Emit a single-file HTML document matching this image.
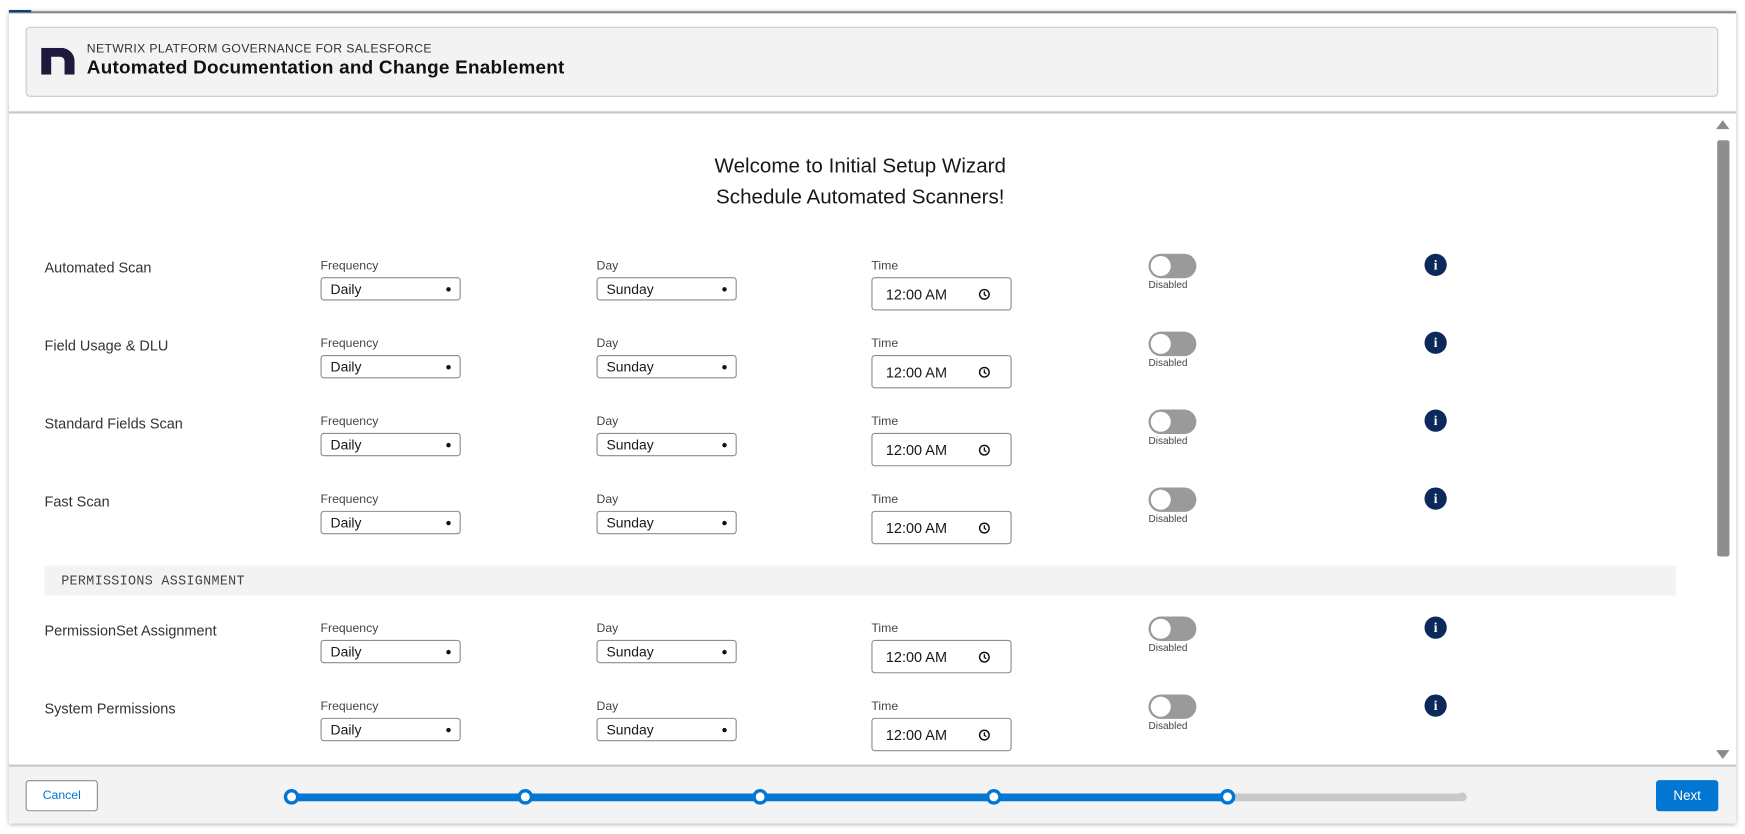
<!DOCTYPE html>
<html><head><meta charset="utf-8"><style>
*{box-sizing:border-box;margin:0;padding:0}
html,body{width:1745px;height:833px;overflow:hidden;background:#fff;font-family:"Liberation Sans",sans-serif;color:#181818}
#w{position:absolute;left:0;top:0;width:1568px;height:749px;transform:scale(1.1129);transform-origin:0 0}
.a{position:absolute}
.card{left:8px;top:10px;width:1552px;height:730px;border-top:2px solid #8a8a8a;box-shadow:0 1px 4px rgba(0,0,0,.35);background:#fff}
.hdr{left:23px;top:24px;width:1521px;height:63px;background:#f3f3f3;border:1px solid #c9c9c9;border-radius:4px}
.lbl{font-size:13px;color:#333}
.sm{font-size:11px;color:#444}
.sel{width:126px;height:21px;border:1px solid #8c8c8c;border-radius:3px;font-size:12.5px;padding:3px 0 0 8px;color:#181818;background:#fff}
.sel:after{content:"";position:absolute;right:8px;top:8px;width:4px;height:4px;background:#111;border-radius:50%}
.tm{width:126px;height:30px;border:1px solid #8c8c8c;border-radius:3px;font-size:13px;padding:7px 0 0 12px;background:#fff}
.tm svg{position:absolute;right:18px;top:9px}
.tg{width:43px;height:22px;border-radius:11px;background:#9a9a9a}
.tg:after{content:"";position:absolute;left:2px;top:2px;width:18px;height:18px;border-radius:50%;background:#fff}
.dis{font-size:9px;color:#444}
.inf{width:20px;height:20px;border-radius:50%;background:#0b2a5b;color:#fff;font:bold 12px "Liberation Serif",serif;text-align:center;line-height:20px}
.dot{width:14px;height:14px;border-radius:50%;border:3px solid #0176d3;background:#fff;top:709px}
</style></head><body><div id="w">
<div class="a card"></div>
<div class="a" style="left:8px;top:9px;width:20px;height:2px;background:#0b3b7a"></div>
<div class="a hdr"></div>
<svg class="a" style="left:37px;top:43px" width="30" height="24" viewBox="0 0 30 24"><path d="M0 24V0h18a12 12 0 0 1 12 12v12h-9V12a4 4 0 0 0-4-4H9v16z" fill="#1f1a3d"/></svg>
<div class="a" style="left:78px;top:38px;font-size:11px;color:#333;letter-spacing:.3px">NETWRIX PLATFORM GOVERNANCE FOR SALESFORCE</div>
<div class="a" style="left:78px;top:51px;font-size:17px;font-weight:bold;color:#111;letter-spacing:.2px">Automated Documentation and Change Enablement</div>
<div class="a" style="left:8px;top:100px;width:1552px;height:2px;background:#c8c8c8"></div>
<div class="a" style="left:1542px;top:108px;width:0;height:0;border-left:6px solid transparent;border-right:6px solid transparent;border-bottom:8px solid #8a8a8a"></div>
<div class="a" style="left:1543px;top:126px;width:11px;height:374px;background:#8e8e8e;border-radius:2px"></div>
<div class="a" style="left:1542px;top:674px;width:0;height:0;border-left:6px solid transparent;border-right:6px solid transparent;border-top:8px solid #8a8a8a"></div>
<div class="a" style="left:0;top:135px;width:1546px;text-align:center;font-size:18.5px;line-height:28px;color:#181818">Welcome to Initial Setup Wizard<br>Schedule Automated Scanners!</div>
<div class="a" style="left:40px;top:508px;width:1466px;height:27px;background:#f3f3f3"></div>
<div class="a" style="left:55px;top:515px;font:12px 'Liberation Mono',monospace;color:#444;letter-spacing:.3px">PERMISSIONS ASSIGNMENT</div>

<div class="a lbl" style="left:40px;top:233px">Automated Scan</div>
<div class="a sm" style="left:288px;top:233px">Frequency</div><div class="a sel" style="left:288px;top:249px">Daily</div>
<div class="a sm" style="left:536px;top:233px">Day</div><div class="a sel" style="left:536px;top:249px">Sunday</div>
<div class="a sm" style="left:783px;top:233px">Time</div><div class="a tm" style="left:783px;top:249px">12:00 AM<svg width="11" height="11" viewBox="0 0 11 11"><circle cx="5.5" cy="5.5" r="4.3" fill="none" stroke="#111" stroke-width="1.3"/><path d="M5.5 3v2.7l1.8 1.2" fill="none" stroke="#111" stroke-width="1.2"/></svg></div>
<div class="a tg" style="left:1032px;top:228px"></div><div class="a dis" style="left:1032px;top:251px">Disabled</div>
<div class="a inf" style="left:1280px;top:228px">i</div>

<div class="a lbl" style="left:40px;top:303px">Field Usage &amp; DLU</div>
<div class="a sm" style="left:288px;top:303px">Frequency</div><div class="a sel" style="left:288px;top:319px">Daily</div>
<div class="a sm" style="left:536px;top:303px">Day</div><div class="a sel" style="left:536px;top:319px">Sunday</div>
<div class="a sm" style="left:783px;top:303px">Time</div><div class="a tm" style="left:783px;top:319px">12:00 AM<svg width="11" height="11" viewBox="0 0 11 11"><circle cx="5.5" cy="5.5" r="4.3" fill="none" stroke="#111" stroke-width="1.3"/><path d="M5.5 3v2.7l1.8 1.2" fill="none" stroke="#111" stroke-width="1.2"/></svg></div>
<div class="a tg" style="left:1032px;top:298px"></div><div class="a dis" style="left:1032px;top:321px">Disabled</div>
<div class="a inf" style="left:1280px;top:298px">i</div>

<div class="a lbl" style="left:40px;top:373px">Standard Fields Scan</div>
<div class="a sm" style="left:288px;top:373px">Frequency</div><div class="a sel" style="left:288px;top:389px">Daily</div>
<div class="a sm" style="left:536px;top:373px">Day</div><div class="a sel" style="left:536px;top:389px">Sunday</div>
<div class="a sm" style="left:783px;top:373px">Time</div><div class="a tm" style="left:783px;top:389px">12:00 AM<svg width="11" height="11" viewBox="0 0 11 11"><circle cx="5.5" cy="5.5" r="4.3" fill="none" stroke="#111" stroke-width="1.3"/><path d="M5.5 3v2.7l1.8 1.2" fill="none" stroke="#111" stroke-width="1.2"/></svg></div>
<div class="a tg" style="left:1032px;top:368px"></div><div class="a dis" style="left:1032px;top:391px">Disabled</div>
<div class="a inf" style="left:1280px;top:368px">i</div>

<div class="a lbl" style="left:40px;top:443px">Fast Scan</div>
<div class="a sm" style="left:288px;top:443px">Frequency</div><div class="a sel" style="left:288px;top:459px">Daily</div>
<div class="a sm" style="left:536px;top:443px">Day</div><div class="a sel" style="left:536px;top:459px">Sunday</div>
<div class="a sm" style="left:783px;top:443px">Time</div><div class="a tm" style="left:783px;top:459px">12:00 AM<svg width="11" height="11" viewBox="0 0 11 11"><circle cx="5.5" cy="5.5" r="4.3" fill="none" stroke="#111" stroke-width="1.3"/><path d="M5.5 3v2.7l1.8 1.2" fill="none" stroke="#111" stroke-width="1.2"/></svg></div>
<div class="a tg" style="left:1032px;top:438px"></div><div class="a dis" style="left:1032px;top:461px">Disabled</div>
<div class="a inf" style="left:1280px;top:438px">i</div>

<div class="a lbl" style="left:40px;top:559px">PermissionSet Assignment</div>
<div class="a sm" style="left:288px;top:559px">Frequency</div><div class="a sel" style="left:288px;top:575px">Daily</div>
<div class="a sm" style="left:536px;top:559px">Day</div><div class="a sel" style="left:536px;top:575px">Sunday</div>
<div class="a sm" style="left:783px;top:559px">Time</div><div class="a tm" style="left:783px;top:575px">12:00 AM<svg width="11" height="11" viewBox="0 0 11 11"><circle cx="5.5" cy="5.5" r="4.3" fill="none" stroke="#111" stroke-width="1.3"/><path d="M5.5 3v2.7l1.8 1.2" fill="none" stroke="#111" stroke-width="1.2"/></svg></div>
<div class="a tg" style="left:1032px;top:554px"></div><div class="a dis" style="left:1032px;top:577px">Disabled</div>
<div class="a inf" style="left:1280px;top:554px">i</div>

<div class="a lbl" style="left:40px;top:629px">System Permissions</div>
<div class="a sm" style="left:288px;top:629px">Frequency</div><div class="a sel" style="left:288px;top:645px">Daily</div>
<div class="a sm" style="left:536px;top:629px">Day</div><div class="a sel" style="left:536px;top:645px">Sunday</div>
<div class="a sm" style="left:783px;top:629px">Time</div><div class="a tm" style="left:783px;top:645px">12:00 AM<svg width="11" height="11" viewBox="0 0 11 11"><circle cx="5.5" cy="5.5" r="4.3" fill="none" stroke="#111" stroke-width="1.3"/><path d="M5.5 3v2.7l1.8 1.2" fill="none" stroke="#111" stroke-width="1.2"/></svg></div>
<div class="a tg" style="left:1032px;top:624px"></div><div class="a dis" style="left:1032px;top:647px">Disabled</div>
<div class="a inf" style="left:1280px;top:624px">i</div>

<div class="a" style="left:8px;top:687px;width:1552px;height:53px;background:#f3f3f3;border-top:2px solid #c8c8c8"></div>
<div class="a" style="left:23px;top:701px;width:65px;height:28px;border:1px solid #8c8c8c;border-radius:3px;background:#fff;color:#0176d3;font-size:11px;text-align:center;line-height:26px">Cancel</div>
<div class="a" style="left:262px;top:713px;width:842px;height:7px;background:#0176d3"></div>
<div class="a" style="left:1104px;top:713px;width:210px;height:7px;background:#c9c9c9"></div>
<div class="a dot" style="left:255px"></div>
<div class="a dot" style="left:465px"></div>
<div class="a dot" style="left:676px"></div>
<div class="a dot" style="left:886px"></div>
<div class="a dot" style="left:1096px"></div>
<div class="a" style="left:1310px;top:712px;width:8px;height:8px;border-radius:50%;background:#c9c9c9"></div>
<div class="a" style="left:1488px;top:701px;width:56px;height:28px;border-radius:3px;background:#0176d3;color:#fff;font-size:12px;text-align:center;line-height:28px">Next</div>
</div></body></html>
